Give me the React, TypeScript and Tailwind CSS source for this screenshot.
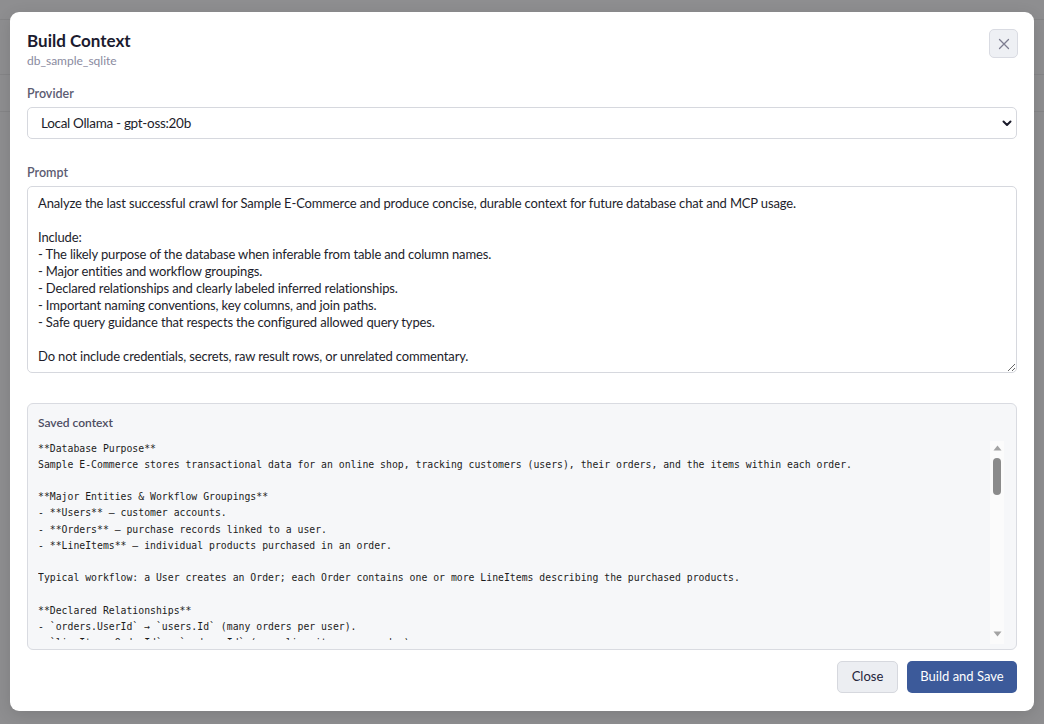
import React from "react";

const promptText = `Analyze the last successful crawl for Sample E-Commerce and produce concise, durable context for future database chat and MCP usage.

Include:
- The likely purpose of the database when inferable from table and column names.
- Major entities and workflow groupings.
- Declared relationships and clearly labeled inferred relationships.
- Important naming conventions, key columns, and join paths.
- Safe query guidance that respects the configured allowed query types.

Do not include credentials, secrets, raw result rows, or unrelated commentary.`;

const savedText = `**Database Purpose**
Sample E-Commerce stores transactional data for an online shop, tracking customers (users), their orders, and the items within each order.

**Major Entities & Workflow Groupings**
- **Users** – customer accounts.
- **Orders** – purchase records linked to a user.
- **LineItems** – individual products purchased in an order.

Typical workflow: a User creates an Order; each Order contains one or more LineItems describing the purchased products.

**Declared Relationships**
- \`orders.UserId\` → \`users.Id\` (many orders per user).
- \`lineItems.OrderId\` → \`orders.Id\` (many line items per order).
- \`lineItems.ProductId\` → \`products.Id\` (inferred).`;

const sans = "font-['Segoe_UI','Lato','Noto_Sans',sans-serif]";

export default function App() {
  return (
    <div className={`relative w-[1044px] h-[724px] bg-[#8e8e90] overflow-hidden ${sans}`}>
      {/* underlying page hints */}
      <div className="flex flex-col">
        <div className="h-[20px] border-b border-[#858587]" />
        <div className="h-[55px] border-b border-[#858587]" />
        <div className="h-[37px] border-b border-[#858587]" />
      </div>

      {/* modal */}
      <div className="absolute left-[10px] top-[12px] w-[1024px] h-[699px] bg-white rounded-[9px] shadow-[0_4px_16px_rgba(0,0,0,0.12)] px-[17px] pt-[17px] pb-[18px] flex flex-col">
        <div className="flex items-start justify-between">
          <div className="flex flex-col pt-[2px]">
            <div className="text-[17px] leading-[20px] font-bold text-[#1b1b2f]">Build Context</div>
            <div className="text-[12px] leading-[16px] text-[#8a8aa0] mt-[2px]">db_sample_sqlite</div>
          </div>
          <button className="w-[29px] h-[29px] mr-[-1px] rounded-[5px] bg-[#eef0f4] border border-[#d9dbe2] flex items-center justify-center">
            <svg width="12" height="12" viewBox="0 0 12 12" fill="none" stroke="#7d7d90" strokeWidth="1.3" strokeLinecap="round">
              <path d="M1.5 1.5 L10.5 10.5 M10.5 1.5 L1.5 10.5" />
            </svg>
          </button>
        </div>

        <div className="mt-[17px] text-[12.5px] leading-[16px] font-semibold text-[#5c5c72]">Provider</div>
        <div className="relative mt-[5px]">
          <select className={`appearance-none w-full h-[32px] rounded-[5px] border border-[#d6d8de] bg-white pl-[13px] text-[13.5px] tracking-[-0.3px] text-[#1d1d2b] outline-none ${sans}`}>
            <option>Local Ollama - gpt-oss:20b</option>
          </select>
          <svg className="absolute right-[5px] top-[13px]" width="10" height="7" viewBox="0 0 10 7" fill="none" stroke="#1b1b2b" strokeWidth="2" strokeLinecap="round" strokeLinejoin="round">
            <path d="M1.5 1.5 L5 5 L8.5 1.5" />
          </svg>
        </div>

        <div className="mt-[26px] text-[12.5px] leading-[16px] font-semibold text-[#5c5c72]">Prompt</div>
        <textarea
          className={`mt-[5px] w-full h-[187px] rounded-[5px] border border-[#d6d8de] bg-white px-[10px] pt-[8px] text-[13px] tracking-[-0.15px] leading-[17px] text-[#1d1d2b] resize-y outline-none ${sans}`}
          defaultValue={promptText}
        />

        <div className="mt-[30px] h-[248px] rounded-[6px] border border-[#d9dbe1] bg-[#f6f7f9] pl-[10px] pr-[12px] pt-[11px] flex flex-col">
          <div className="text-[12px] leading-[16px] font-semibold text-[#4d4d62]">Saved context</div>
          <div className="flex items-start mt-[10px] h-[204px]">
            <pre className="flex-1 h-[199px] overflow-hidden m-0 font-['DejaVu_Sans_Mono','Liberation_Mono',monospace] text-[9.8px] leading-[16.2px] text-[#1c1c1c] whitespace-pre">
              {savedText}
            </pre>
            <div className="w-[14px] h-[203px] bg-[#fbfbfb] flex flex-col items-center">
              <svg className="mt-[4px]" width="9" height="6" viewBox="0 0 9 6"><path d="M4.5 0.5 L8.5 5.5 L0.5 5.5 Z" fill="#a3a3a3" /></svg>
              <div className="mt-[7px] w-[8px] h-[37px] rounded-[4px] bg-[#8b8b8b]" />
              <div className="flex-1" />
              <svg className="mb-[7px]" width="9" height="6" viewBox="0 0 9 6"><path d="M0.5 0.5 L8.5 0.5 L4.5 5.5 Z" fill="#a3a3a3" /></svg>
            </div>
          </div>
        </div>

        <div className="mt-[11px] flex justify-end gap-[9px]">
          <button className="h-[32px] w-[61px] rounded-[5px] border border-[#d6d8de] bg-[#eceef2] text-[13px] text-[#24243a]">Close</button>
          <button className="h-[32px] w-[110px] rounded-[5px] bg-[#3c5a9a] text-[13px] text-white">Build and Save</button>
        </div>
      </div>
    </div>
  );
}
